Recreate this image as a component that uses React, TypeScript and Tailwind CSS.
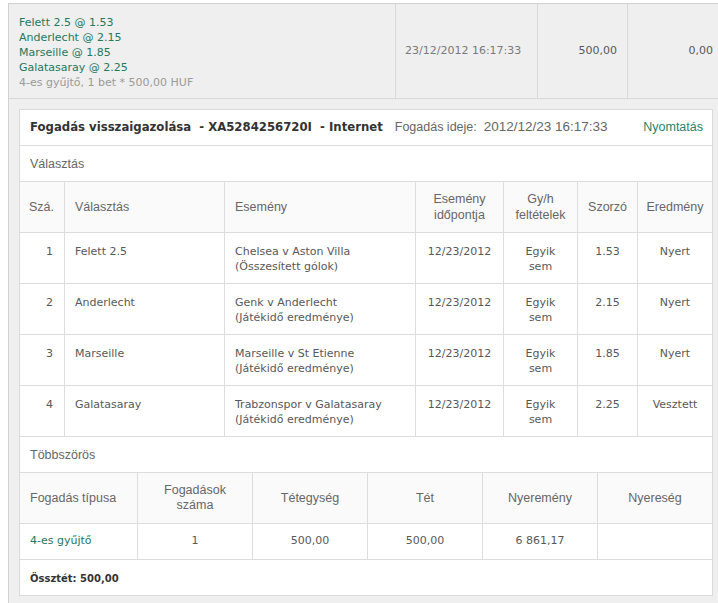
const tahoma = "font-['Liberation_Sans',Tahoma,Arial,sans-serif] text-[12.5px]";

type Selection = {
  no: number;
  pick: string;
  event: string;
  market: string;
  odds: string;
  result: string;
};

const selections: Selection[] = [
  { no: 1, pick: "Felett 2.5", event: "Chelsea v Aston Villa", market: "(Összesített gólok)", odds: "1.53", result: "Nyert" },
  { no: 2, pick: "Anderlecht", event: "Genk v Anderlecht", market: "(Játékidő eredménye)", odds: "2.15", result: "Nyert" },
  { no: 3, pick: "Marseille", event: "Marseille v St Etienne", market: "(Játékidő eredménye)", odds: "1.85", result: "Nyert" },
  { no: 4, pick: "Galatasaray", event: "Trabzonspor v Galatasaray", market: "(Játékidő eredménye)", odds: "2.25", result: "Vesztett" },
];

const Label = ({ children }: { children: string }) => (
  <div className={`h-[36px] border-b border-[#dddddd] flex items-center pl-[10px] pt-[2px] text-[#666] ${tahoma}`}>
    {children}
  </div>
);

export default function App() {
  return (
    <div className="w-[718px] h-[603px] overflow-hidden bg-white font-['DejaVu_Sans',Verdana,sans-serif] text-[11px] text-[#585858]">
      <div className="mt-[3px] ml-[8px] w-[710px] border-l border-t border-[#d2d2d2] bg-[#efefef]">
        {/* summary row */}
        <div className="flex h-[95px] border-b border-[#d9d9d9]">
          <div className="w-[387px] border-r border-[#d9d9d9] pl-[10px] pt-[11px] leading-[15px]">
            <div className="text-[#23795c]">Felett 2.5 @ 1.53</div>
            <div className="text-[#23795c]">Anderlecht @ 2.15</div>
            <div className="text-[#23795c]">Marseille @ 1.85</div>
            <div className="text-[#23795c]">Galatasaray @ 2.25</div>
            <div className="text-[#9a9a9a]">4-es gyűjtő, 1 bet * 500,00 HUF</div>
          </div>
          <div className="w-[142px] border-r border-[#d9d9d9] flex items-center pl-[9px] text-[#7a7a7a]">
            23/12/2012 16:17:33
          </div>
          <div className="w-[90px] border-r border-[#d9d9d9] flex items-center justify-end pr-[10px]">500,00</div>
          <div className="w-[90px] flex items-center justify-end pr-[5px]">0,00</div>
        </div>

        <div className="pl-[10px] pt-[10px] pb-[10px]">
          <div className="w-[694px] border border-[#dadada] bg-white">
            {/* header */}
            <div className="h-[36px] border-b border-[#dddddd] flex items-center pl-[10px] pr-[9px]">
              <span className="font-bold text-[11.7px] text-[#333] whitespace-pre">Fogadás visszaigazolása  - XA5284256720I  - Internet</span>
              <span className={`ml-[12px] text-[#666] ${tahoma}`}>Fogadás ideje:</span>
              <span className="ml-[7px] text-[#666] font-['Liberation_Sans',Tahoma,Arial,sans-serif] text-[13.5px]">2012/12/23 16:17:33</span>
              <span className={`ml-auto text-[#2a8466] ${tahoma}`}>Nyomtatás</span>
            </div>

            <Label>Választás</Label>

            {/* selections table */}
            <div className={`grid grid-cols-[45px_160px_191px_88px_74px_60px_74px] h-[51px] border-b border-[#dddddd] bg-[#fafafa] text-[#666] leading-[16px] ${tahoma}`}>
              <div className="border-r border-[#dddddd] flex items-center justify-end pr-[10px]">Szá.</div>
              <div className="border-r border-[#dddddd] flex items-center pl-[10px]">Választás</div>
              <div className="border-r border-[#dddddd] flex items-center pl-[10px]">Esemény</div>
              <div className="border-r border-[#dddddd] flex items-center justify-center text-center">Esemény<br />időpontja</div>
              <div className="border-r border-[#dddddd] flex items-center justify-center text-center">Gy/h<br />feltételek</div>
              <div className="border-r border-[#dddddd] flex items-center justify-center">Szorzó</div>
              <div className="flex items-center justify-center">Eredmény</div>
            </div>
            {selections.map((s) => (
              <div
                key={s.no}
                className="grid grid-cols-[45px_160px_191px_88px_74px_60px_74px] h-[51px] border-b border-[#dddddd] leading-[15px]"
              >
                <div className="border-r border-[#dddddd] pt-[11px] text-right pr-[11px]">{s.no}</div>
                <div className="border-r border-[#dddddd] pt-[11px] pl-[10px]">{s.pick}</div>
                <div className="border-r border-[#dddddd] pt-[11px] pl-[10px]">
                  {s.event}
                  <br />
                  {s.market}
                </div>
                <div className="border-r border-[#dddddd] pt-[11px] text-center">12/23/2012</div>
                <div className="border-r border-[#dddddd] pt-[11px] text-center">
                  Egyik
                  <br />
                  sem
                </div>
                <div className="border-r border-[#dddddd] pt-[11px] text-center">{s.odds}</div>
                <div className="pt-[11px] text-center">{s.result}</div>
              </div>
            ))}

            <Label>Többszörös</Label>

            {/* multiples table */}
            <div className={`grid grid-cols-[118px_115px_115px_115px_115px_114px] h-[51px] border-b border-[#dddddd] bg-[#fafafa] text-[#666] leading-[15px] ${tahoma}`}>
              <div className="border-r border-[#dddddd] flex items-center pl-[10px]">Fogadás típusa</div>
              <div className="border-r border-[#dddddd] flex items-center justify-center text-center">Fogadások<br />száma</div>
              <div className="border-r border-[#dddddd] flex items-center justify-center">Tétegység</div>
              <div className="border-r border-[#dddddd] flex items-center justify-center">Tét</div>
              <div className="border-r border-[#dddddd] flex items-center justify-center">Nyeremény</div>
              <div className="flex items-center justify-center">Nyereség</div>
            </div>
            <div className="grid grid-cols-[118px_115px_115px_115px_115px_114px] h-[36px] border-b border-[#dddddd]">
              <div className="border-r border-[#dddddd] flex items-center pl-[10px] text-[#23795c]">4-es gyűjtő</div>
              <div className="border-r border-[#dddddd] flex items-center justify-center">1</div>
              <div className="border-r border-[#dddddd] flex items-center justify-center">500,00</div>
              <div className="border-r border-[#dddddd] flex items-center justify-center">500,00</div>
              <div className="border-r border-[#dddddd] flex items-center justify-center">6 861,17</div>
              <div />
            </div>

            <div className="h-[35px] flex items-center pl-[10px] pt-[2px] font-bold text-[10px] text-[#333]">Össztét: 500,00</div>
          </div>
        </div>
      </div>
    </div>
  );
}
